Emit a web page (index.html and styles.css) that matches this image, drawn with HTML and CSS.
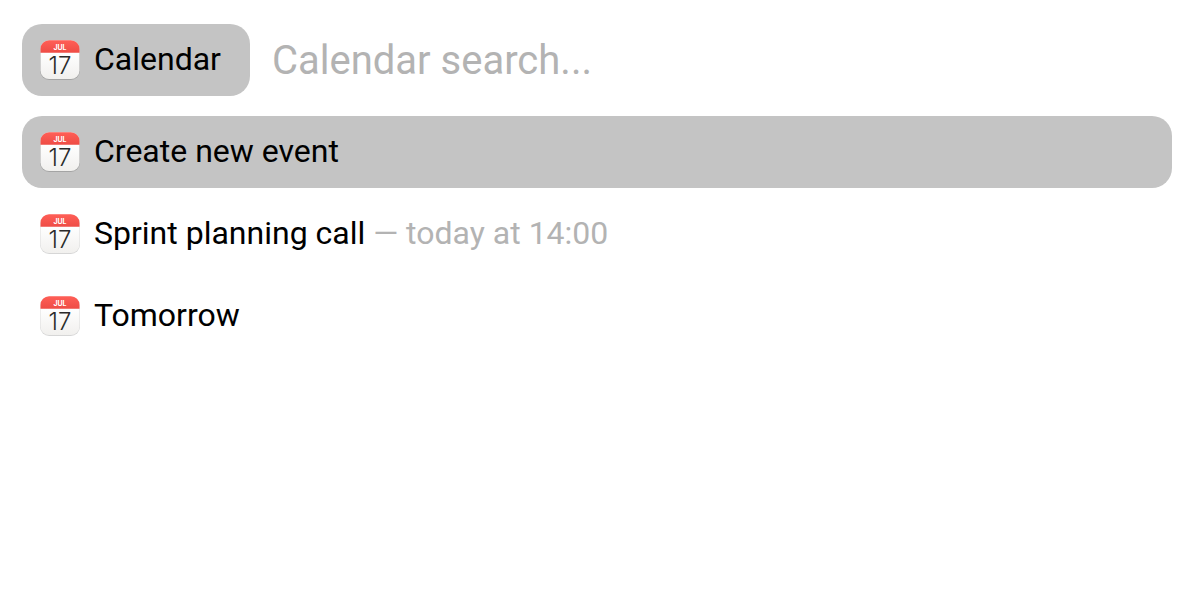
FILE: index.html
```html
<!DOCTYPE html>
<html lang="en">
<head>
<meta charset="utf-8">
<title>Calendar</title>
<link rel="stylesheet" href="styles.css">
</head>
<body>
<svg class="defs" width="0" height="0" aria-hidden="true">
  <defs>
    <linearGradient id="paper" x1="0" y1="0" x2="0" y2="1">
      <stop offset="0.3" stop-color="#ffffff"/>
      <stop offset="1" stop-color="#f1f0ee"/>
    </linearGradient>
    <linearGradient id="band" x1="0" y1="0" x2="0" y2="1">
      <stop offset="0" stop-color="#ff5f57"/>
      <stop offset="1" stop-color="#ee4c45"/>
    </linearGradient>
    <symbol id="calendar" viewBox="0 0 40 40">
      <rect x="0.1" y="0.6" width="39.8" height="39.3" rx="9" fill="#000" opacity="0.16"/>
      <rect x="0.5" y="0.3" width="39" height="38.8" rx="8.6" fill="url(#paper)"/>
      <path d="M0.5 12.8V8.9A8.6 8.6 0 0 1 9.1 0.3H30.9A8.6 8.6 0 0 1 39.5 8.9V12.8Z" fill="url(#band)"/>
      <text class="month" x="20" y="10" text-anchor="middle">JUL</text>
      <text class="day" x="20" y="34" text-anchor="middle">17</text>
    </symbol>
  </defs>
</svg>
<main class="launcher">
  <form class="search" role="search">
    <button class="item scope" type="button">
      <svg class="icon" aria-hidden="true"><use href="#calendar"/></svg>
      <span class="label">Calendar</span>
    </button>
    <input class="query" type="text" placeholder="Calendar search..." aria-label="Calendar search">
  </form>
  <ul class="results">
    <li><button class="item selected" type="button">
      <svg class="icon" aria-hidden="true"><use href="#calendar"/></svg>
      <span class="label">Create new event</span>
    </button></li>
    <li><button class="item" type="button">
      <svg class="icon" aria-hidden="true"><use href="#calendar"/></svg>
      <span class="label">Sprint planning call <span class="detail">— today at 14:00</span></span>
    </button></li>
    <li><button class="item" type="button">
      <svg class="icon" aria-hidden="true"><use href="#calendar"/></svg>
      <span class="label">Tomorrow</span>
    </button></li>
  </ul>
</main>
</body>
</html>
```
FILE: styles.css
```css
* {
  box-sizing: border-box;
}

body {
  margin: 0;
  background: #fff;
  color: #000;
  font-family: Roboto, sans-serif;
}

.defs {
  position: absolute;
}

.launcher {
  display: flex;
  flex-direction: column;
  gap: 20px;
  padding: 24px 28px 24px 22px;
}

.search {
  display: flex;
  gap: 22px;
}

.results {
  display: flex;
  flex-direction: column;
  gap: 10px;
  margin: 0;
  padding: 0;
  list-style: none;
}

.item {
  display: flex;
  align-items: center;
  gap: 14px;
  width: 100%;
  padding: 16px 29px 16px 18px;
  border: 0;
  border-radius: 20px;
  background: transparent;
  color: inherit;
  font-family: inherit;
  font-size: 32px;
  line-height: 40px;
  text-align: left;
}

.scope {
  flex: none;
  width: auto;
}

.scope,
.selected {
  background: #c4c4c4;
}

.icon {
  flex: none;
  width: 40px;
  height: 40px;
}

.label {
  padding-bottom: 2px;
  line-height: 38px;
}

.detail {
  color: #b3b3b3;
}

.query {
  flex: 1;
  min-width: 0;
  padding: 0;
  border: 0;
  outline: 0;
  background: transparent;
  color: inherit;
  font-family: inherit;
  font-size: 40px;
}

.query::placeholder {
  color: #b3b3b3;
  opacity: 1;
}

.month {
  fill: #fff;
  font-family: Inter, sans-serif;
  font-size: 7px;
  font-weight: 700;
}

.day {
  fill: #2b2b2b;
  font-family: Inter, sans-serif;
  font-size: 24px;
  font-weight: 300;
}
```
